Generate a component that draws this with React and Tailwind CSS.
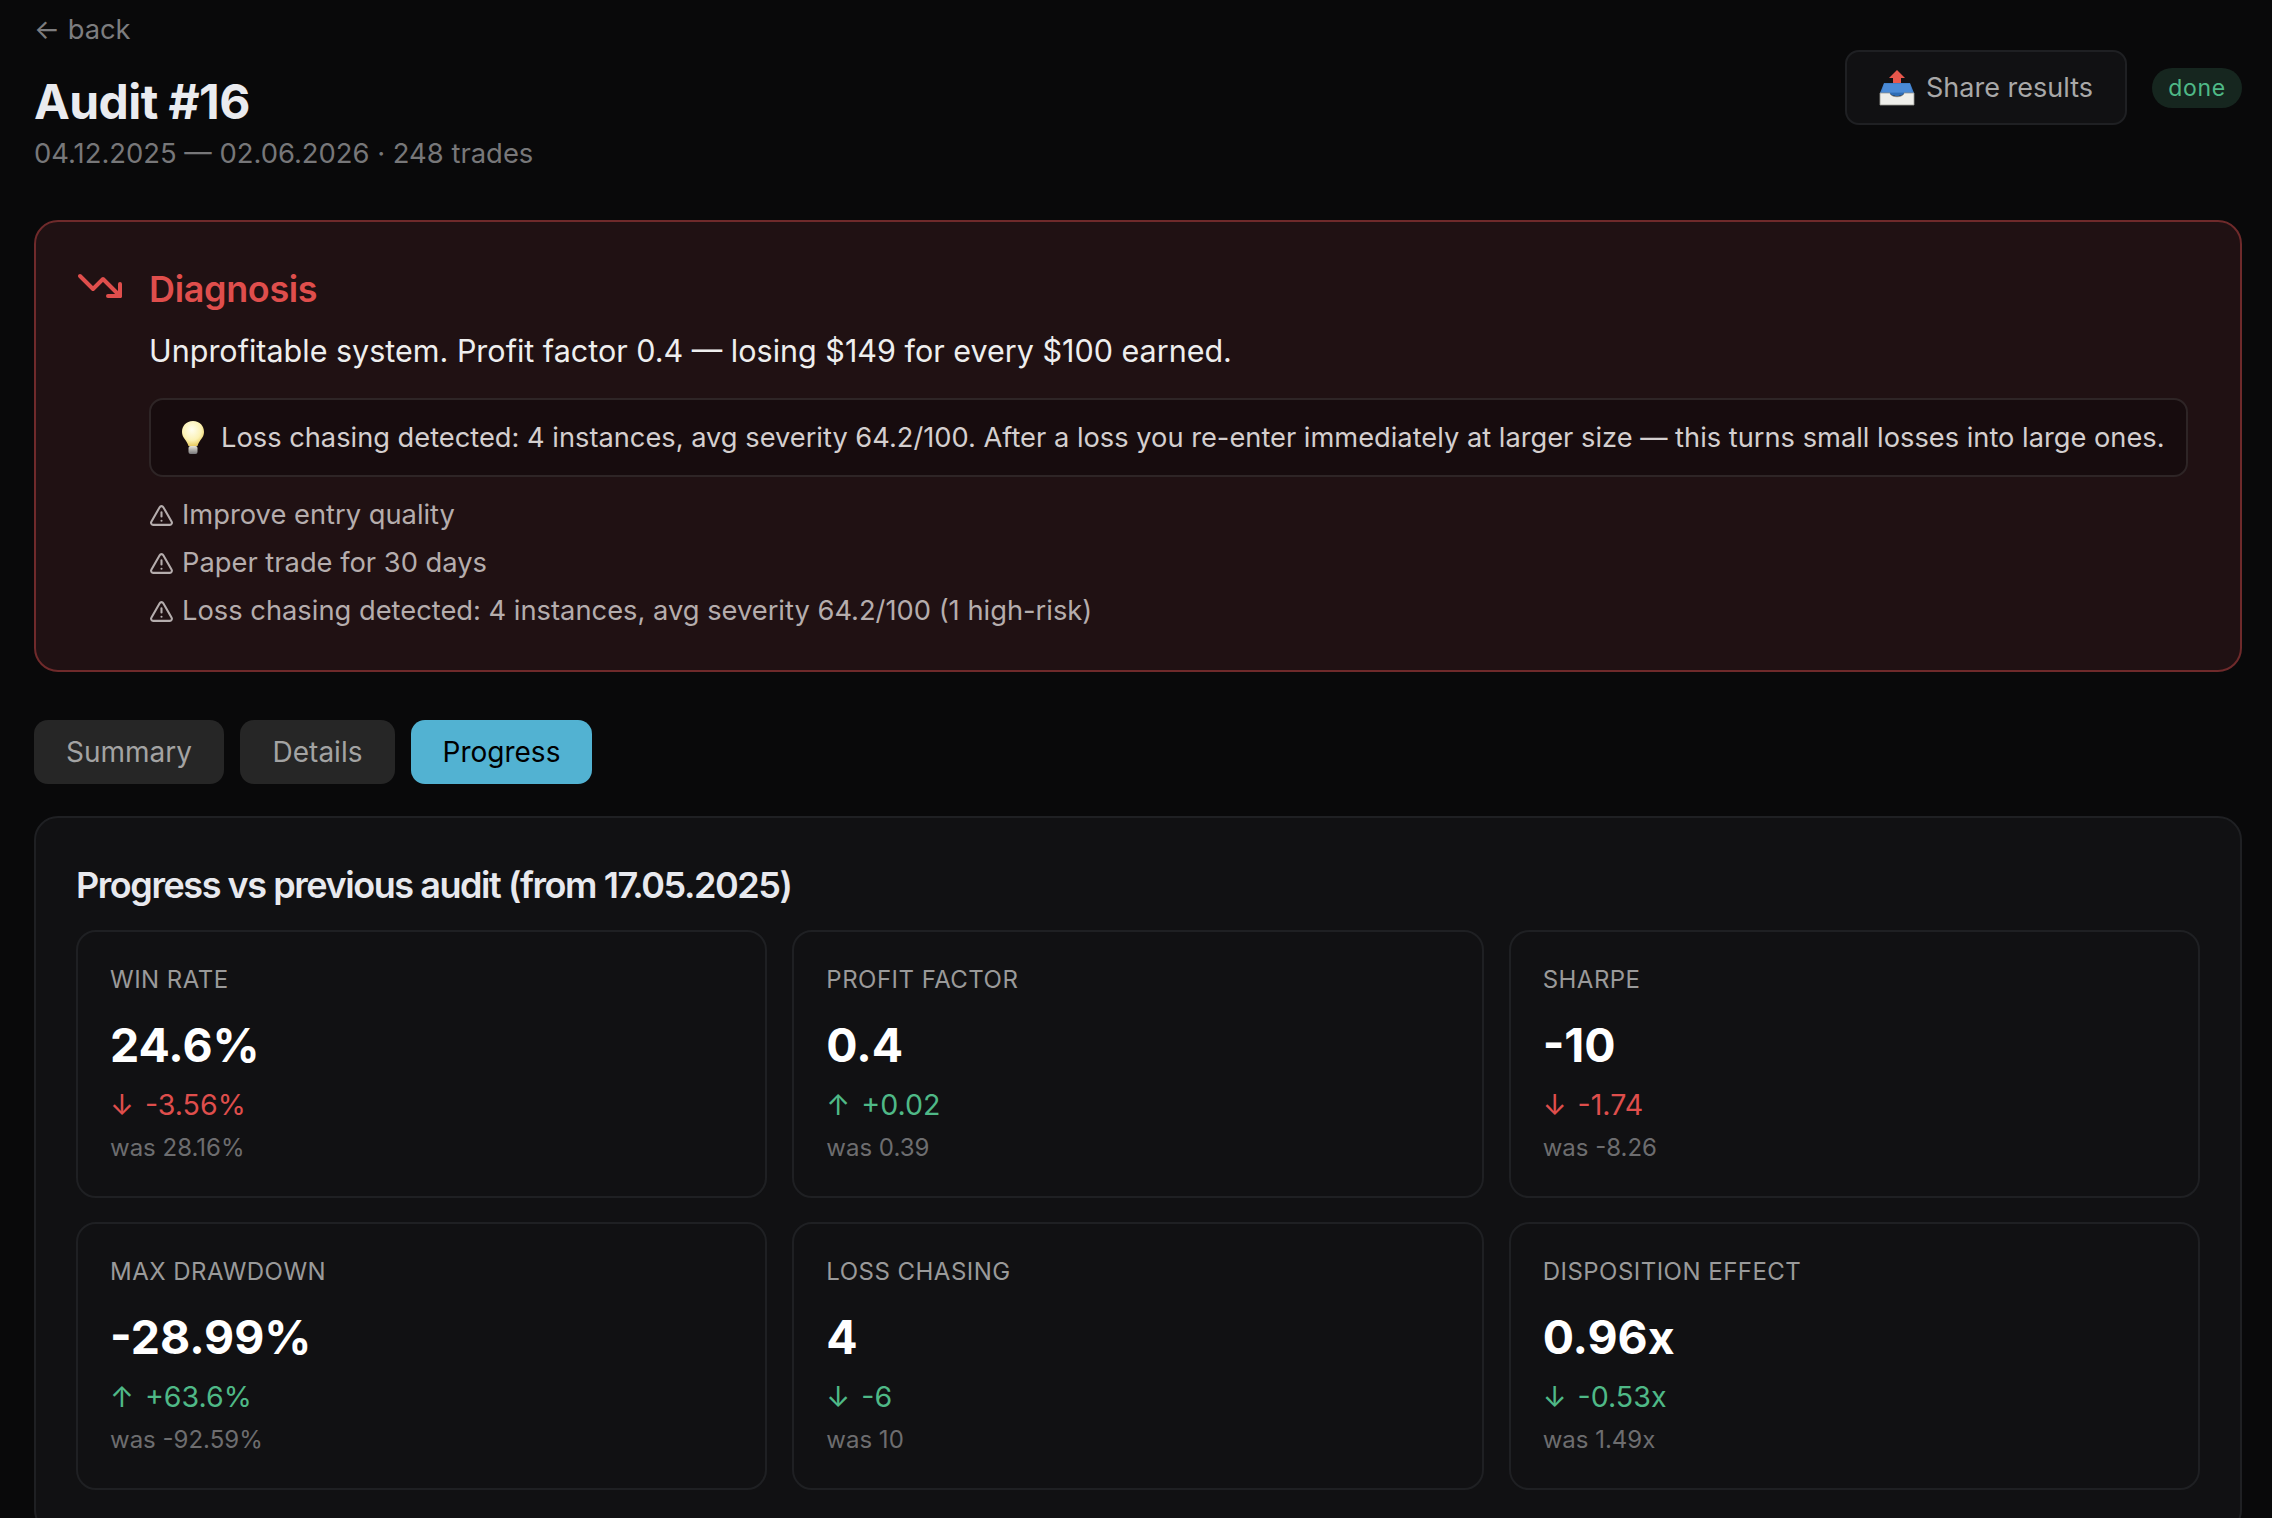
import React from 'react';
import { TriangleAlert, TrendingDown } from 'lucide-react';

const metrics = [
  { label: 'WIN RATE', value: '24.6%', delta: '-3.56%', was: 'was 28.16%', dir: 'down', good: false },
  { label: 'PROFIT FACTOR', value: '0.4', delta: '+0.02', was: 'was 0.39', dir: 'up', good: true },
  { label: 'SHARPE', value: '-10', delta: '-1.74', was: 'was -8.26', dir: 'down', good: false },
  { label: 'MAX DRAWDOWN', value: '-28.99%', delta: '+63.6%', was: 'was -92.59%', dir: 'up', good: true },
  { label: 'LOSS CHASING', value: '4', delta: '-6', was: 'was 10', dir: 'down', good: true },
  { label: 'DISPOSITION EFFECT', value: '0.96x', delta: '-0.53x', was: 'was 1.49x', dir: 'down', good: true },
];

const warnings = [
  'Improve entry quality',
  'Paper trade for 30 days',
  'Loss chasing detected: 4 instances, avg severity 64.2/100 (1 high-risk)',
];

function OutboxEmoji() {
  return (
    <svg width="36" height="36" viewBox="0 0 36 36" className="shrink-0">
      <path d="M18 0 L26 8 H22 V14 H14 V8 H10 Z" fill="#e8574c" />
      <path d="M5 13 H31 L35 23 H1 Z" fill="#3f7fc9" />
      <path d="M5 14 H31 L33 22 H3 Z" fill="#4a8ad6" />
      <path d="M1 23 H11 C12 28 24 28 25 23 H35 V35 H1 Z" fill="#eeeeea" stroke="#9a9a96" strokeWidth="0.8" />
      <path d="M11 23 C12 27 24 27 25 23 Z" fill="#2f6db5" />
    </svg>
  );
}

function BulbEmoji() {
  return (
    <svg width="24" height="34" viewBox="0 0 24 34" className="shrink-0">
      <defs>
        <radialGradient id="bulbGlow" cx="45%" cy="35%" r="65%">
          <stop offset="0%" stopColor="#fffef0" />
          <stop offset="65%" stopColor="#fcf2b4" />
          <stop offset="100%" stopColor="#e9cc62" />
        </radialGradient>
        <linearGradient id="bulbBase" x1="0" y1="0" x2="0" y2="1">
          <stop offset="0%" stopColor="#e8e6d8" />
          <stop offset="100%" stopColor="#77767a" />
        </linearGradient>
      </defs>
      <path d="M12 0 C5 0 1 5 1 11 C1 17 6 19 7.5 25 H16.5 C18 19 23 17 23 11 C23 5 19 0 12 0 Z" fill="url(#bulbGlow)" />
      <rect x="7.5" y="25" width="9" height="8" rx="2" fill="url(#bulbBase)" />
    </svg>
  );
}

function MetricCard({ m }) {
  return (
    <div className="h-[268px] rounded-[20px] border-2 border-[#1f2023] px-[32px] pt-[30px]">
      <div className="text-[24px] leading-[36px] tracking-[0.02em] text-[#9a9a9a]">{m.label}</div>
      <div className="mt-[11px] text-[46.4px] leading-[72px] font-bold text-white">{m.value}</div>
      <div className={`mt-[4px] text-[28.6px] leading-[40px] ${m.good ? 'text-[#4fb987]' : 'text-[#df4e4c]'}`}>
        {m.dir === 'up' ? '↑' : '↓'} <span className="ml-[3px]">{m.delta}</span>
      </div>
      <div className="mt-[5px] text-[24px] leading-[36px] text-[#6d6d6f]">{m.was}</div>
    </div>
  );
}

export default function App() {
  return (
    <div className="h-[1518px] overflow-hidden bg-[#09090a] pt-[12px] pr-[30px] pl-[34px] font-['Inter',sans-serif]">
      <div className="flex items-start justify-between">
        <div>
          <div className="h-[36px] text-[27.3px] leading-[36px] text-[#7d7d7f]">← back</div>
          <h1 className="mt-[22px] text-[48px] leading-[64px] font-bold tracking-[-0.012em] text-[#eaebef]">Audit #16</h1>
          <p className="mt-[1px] text-[27.4px] leading-[36px] text-[#777779]">04.12.2025 — 02.06.2026 · 248 trades</p>
        </div>
        <div className="mt-[38px] flex items-center gap-[25px]">
          <button className="flex h-[75px] w-[282px] items-center justify-center gap-[11px] rounded-[14px] border-2 border-[#1f2023] bg-[#111113] text-[27px] text-[#a8a8a8]">
            <OutboxEmoji />
            <span className="mt-[2px]">Share results</span>
          </button>
          <span className="flex h-[40px] w-[90px] items-center justify-center rounded-full bg-[#16261f] pt-[1px] text-[23px] tracking-[0.03em] text-[#4fb987]">done</span>
        </div>
      </div>

      <section className="mt-[49px] h-[452px] rounded-[24px] border-2 border-[#6f2a2b] bg-[#201113] pt-[41px] pr-[52px] pl-[40px]">
        <div className="flex gap-[25px]">
          <TrendingDown size={48} strokeWidth={2} className="-mt-[1px] shrink-0 text-[#df4e4c]" />
          <div className="min-w-0 flex-1">
            <h2 className="text-[36px] leading-[52px] font-semibold tracking-[-0.01em] text-[#df4e4c]">Diagnosis</h2>
            <p className="mt-[14px] text-[30.5px] leading-[44px] text-[#eeeeee]">Unprofitable system. Profit factor 0.4 — losing $149 for every $100 earned.</p>
            <div className="mt-[25px] flex h-[79px] items-center gap-[16px] rounded-[14px] border-2 border-[#2e2526] bg-[#170c0e] pl-[30px]">
              <BulbEmoji />
              <span className="mt-[2px] text-[27.25px] whitespace-nowrap text-[#d4cfcf]">Loss chasing detected: 4 instances, avg severity 64.2/100. After a loss you re-enter immediately at larger size — this turns small losses into large ones.</span>
            </div>
            <ul className="mt-[14px] flex flex-col">
              {warnings.map((w) => (
                <li key={w} className="flex h-[48px] items-center gap-[8px] text-[27.3px] text-[#b5adad]">
                  <TriangleAlert size={25} strokeWidth={2} className="shrink-0" />
                  <span>{w}</span>
                </li>
              ))}
            </ul>
          </div>
        </div>
      </section>

      <div className="mt-[48px] flex gap-[16px]">
        <button className="h-[64px] w-[190px] rounded-[14px] bg-[#262626] text-[28px] text-[#a3a3a3]">Summary</button>
        <button className="h-[64px] w-[155px] rounded-[14px] bg-[#262626] text-[28px] text-[#a3a3a3]">Details</button>
        <button className="h-[64px] w-[181px] rounded-[14px] bg-[#52b2d2] text-[28px] text-black">Progress</button>
      </div>

      <section className="mt-[32px] rounded-[24px] border-2 border-[#1f2023] bg-[#111113] px-[40px] pt-[41px] pb-[42px]">
        <h2 className="text-[36px] leading-[52px] font-semibold tracking-[-0.04em] text-[#e8e9ee]">Progress vs previous audit (from 17.05.2025)</h2>
        <div className="mt-[19px] grid grid-cols-3 gap-x-[25px] gap-y-[24px]">
          {metrics.map((m) => (
            <MetricCard key={m.label} m={m} />
          ))}
        </div>
      </section>
    </div>
  );
}
